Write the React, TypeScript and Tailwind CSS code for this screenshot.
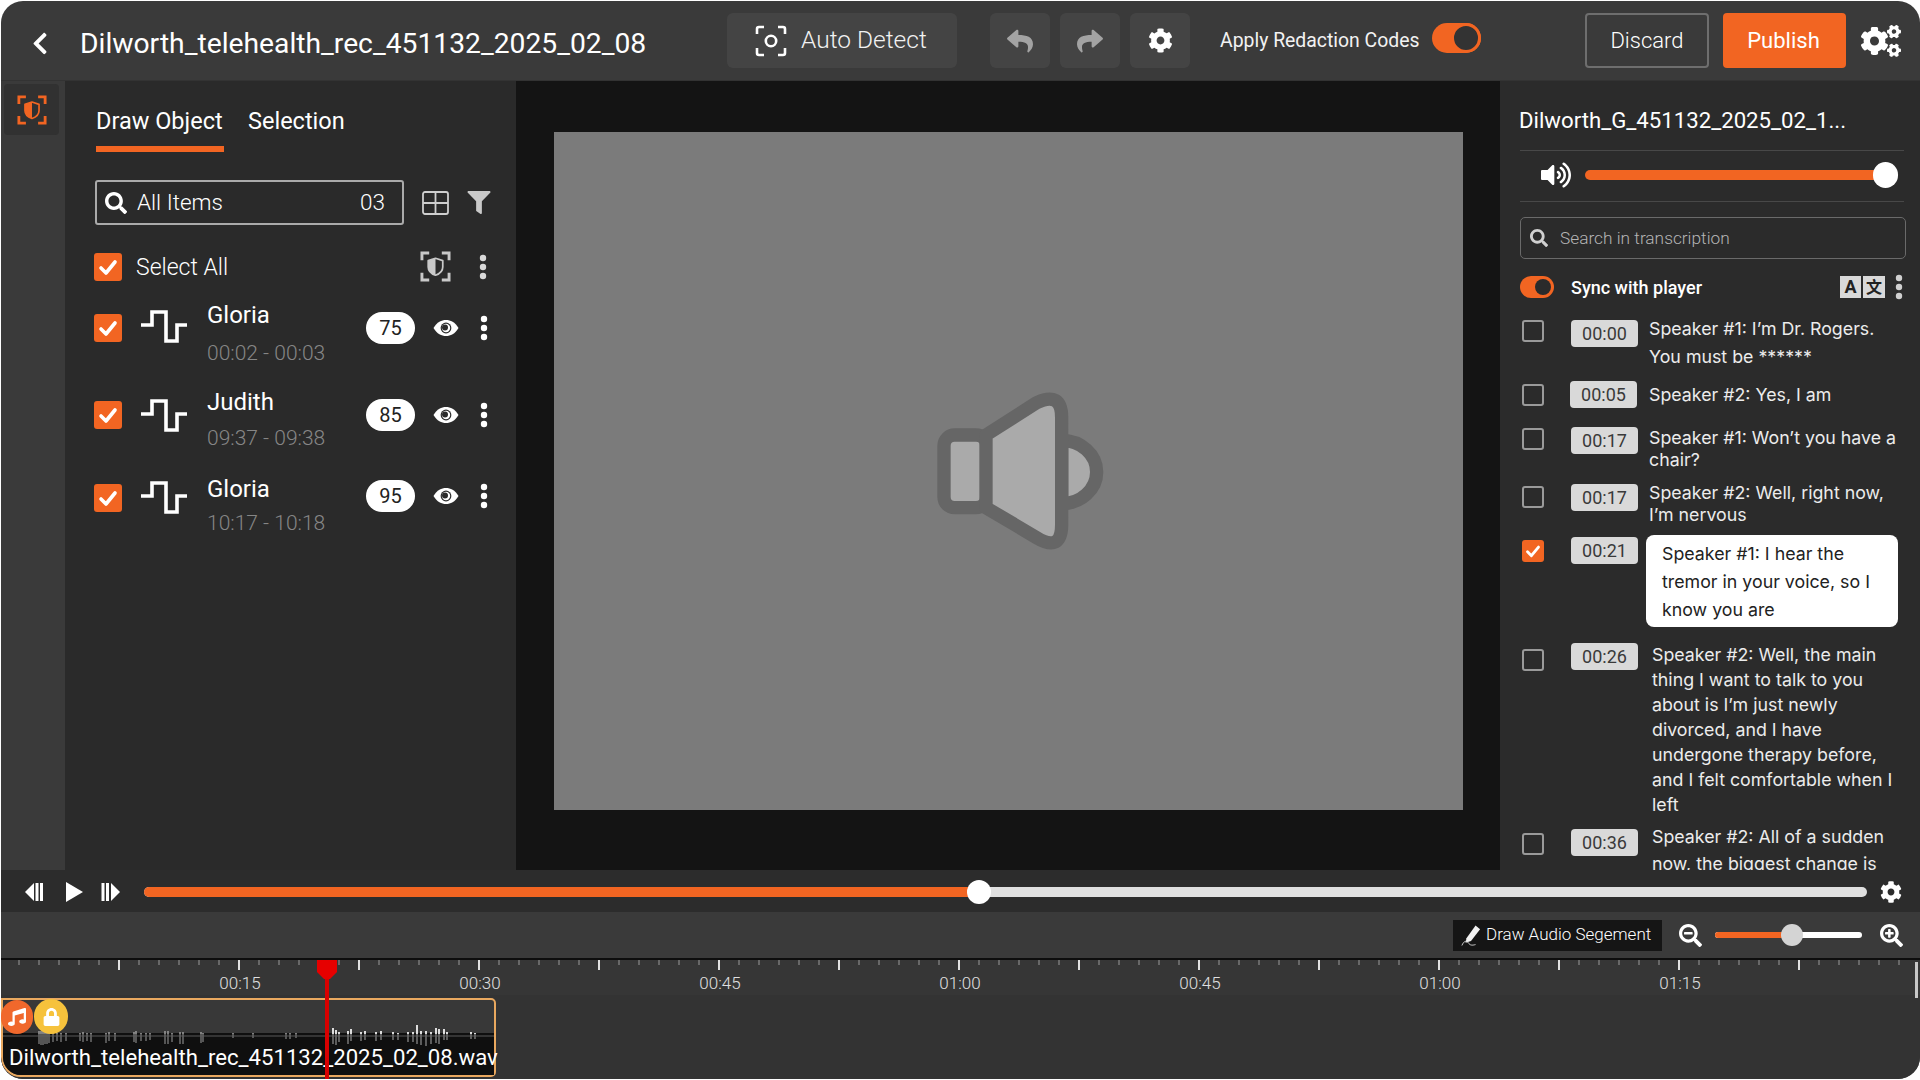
import React from "react";
import { FaCog, FaCogs, FaFilter, FaLock, FaMusic, FaReply, FaSearch, FaSearchMinus, FaSearchPlus, FaShare, FaVolumeUp, FaChevronLeft } from "react-icons/fa";

const Check = ({ cls = "w-[28px] h-[28px]" }: { cls?: string }) => (
  <div className={`${cls} bg-[#f26522] rounded-[3px] flex items-center justify-center shrink-0`}>
    <svg viewBox="0 0 28 28" className="w-full h-full"><path d="M7 15l5 5 9-11" fill="none" stroke="#fff" strokeWidth="3.6" strokeLinecap="round" strokeLinejoin="round" /></svg>
  </div>
);

const Dots = ({ cls = "" }: { cls?: string }) => (
  <svg viewBox="0 0 8 26" className={`w-[8px] h-[26px] ${cls}`} fill="currentColor"><circle cx="4" cy="4" r="3.2" /><circle cx="4" cy="13" r="3.2" /><circle cx="4" cy="22" r="3.2" /></svg>
);

const Pulse = () => (
  <svg viewBox="0 0 46 33" className="w-[46px] h-[33px] shrink-0"><path d="M0 15H11V2H25V31H36V15H46" fill="none" stroke="#fff" strokeWidth="3.6" /></svg>
);

const Eye = () => (
  <svg viewBox="0 0 26 18" className="w-[26px] h-[18px]"><path d="M0.5 9C4 3 8.5 1 13 1s9 2 12.5 8C22 15 17.5 17 13 17S4 15 0.5 9z" fill="#fff" /><circle cx="13" cy="9" r="5.4" fill="#2b2b2b" /><circle cx="13" cy="9" r="4.2" fill="#fff" /><circle cx="12" cy="8.4" r="3" fill="#2b2b2b" /></svg>
);

const Brackets = ({ color, cls }: { color: string; cls: string }) => (
  <svg viewBox="0 0 32 32" className={cls}>
    <path d="M2 9.500V2h7.500M22.500 2H30v7.500M30 22.500V30h-7.500M9.500 30H2v-7.500" fill="none" stroke={color} strokeWidth="3" />
    <path d="M16 7.500l7.500 2.500v6.500c0 4-3 7-7.500 8.500-4.500-1.500-7.500-4.500-7.500-8.500V10z" fill="none" stroke={color} strokeWidth="1.800" strokeLinejoin="round" />
    <path d="M16 7.500l-7.500 2.500v6.500c0 4 3 7 7.500 8.500z" fill={color} />
  </svg>
);

const items = [
  { name: "Gloria", time: "00:02 - 00:03", score: "75", cb: "mt-[14px]", pu: "mt-[10px]", tm: "mt-[8px]", bd: "mt-[12px]" },
  { name: "Judith", time: "09:37 - 09:38", score: "85", cb: "mt-[14px]", pu: "mt-[12px]", tm: "mt-[6px]", bd: "mt-[12px]" },
  { name: "Gloria", time: "10:17 - 10:18", score: "95", cb: "mt-[10px]", pu: "mt-[7px]", tm: "mt-[4px]", bd: "mt-[6px]" },
];

const rows = [
  { t: "00:00", h: "h-[67px]", cb: "mt-[5px]", pill: "mt-[5px] ml-[27px]", tx: "w-[252px] ml-[11px] leading-[28px]", text: "Speaker #1: I’m Dr. Rogers. You must be ******" },
  { t: "00:05", h: "h-[45px]", cb: "mt-[2px]", pill: "-mt-[1px] ml-[26px]", tx: "w-[252px] ml-[12px] mt-[2px] leading-[22px]", text: "Speaker #2: Yes, I am" },
  { t: "00:17", h: "h-[55px]", cb: "mt-[1px]", pill: "ml-[27px]", tx: "w-[252px] ml-[11px] leading-[22px]", text: "Speaker #1: Won’t you have a chair?" },
  { t: "00:17", h: "h-[54px]", cb: "mt-[4px]", pill: "mt-[2px] ml-[27px]", tx: "w-[252px] ml-[11px] leading-[22px]", text: "Speaker #2: Well, right now, I’m nervous" },
];

const Pill = ({ t, cls }: { t: string; cls: string }) => (
  <div className={`w-[67px] h-[27px] bg-[#d9d9d9] rounded-[4px] text-[#3a3a3a] text-[18px] leading-[27px] text-center shrink-0 ${cls}`}>{t}</div>
);

const Box = ({ cls }: { cls: string }) => <div className={`w-[22px] h-[22px] border-2 border-[#9a9a9a] rounded-[3px] shrink-0 ${cls}`} />;

const wave: [number, number, number][] = [
  [36, 3, 8], [38, 3, 9], [40, 3, 9], [42, 2, 8], [44, 3, 8], [46, 2, 7], [50, 2, 6], [54, 1, 5], [58, 1, 6], [63, 1, 5], [77, 1, 5], [80, 2, 6], [84, 1, 5], [88, 1, 6], [103, 1, 7], [106, 2, 5], [112, 1, 5], [131, 2, 6], [133, 3, 7], [138, 1, 5], [143, 1, 5], [147, 1, 4], [162, 3, 8], [165, 3, 8], [169, 1, 6], [177, 2, 8], [180, 2, 8], [198, 2, 7], [200, 1, 6], [230, 1, 2], [250, 1, 2], [283, 1, 3], [287, 1, 3], [293, 1, 2],
  [330, 6, 8], [333, 4, 9], [336, 2, 6], [345, 3, 8], [348, 5, 5], [358, 2, 5], [362, 3, 4], [373, 2, 5], [378, 3, 4], [390, 2, 4], [395, 1, 4], [405, 2, 6], [410, 2, 6], [414, 9, 8], [418, 3, 9], [423, 3, 10], [428, 2, 8], [433, 6, 7], [436, 5, 8], [441, 5, 4], [444, 2, 4], [468, 2, 3], [472, 1, 3],
];

const ticks: number[] = Array.from({ length: 96 }, (_, i) => i * 20 - 2);

export default function App() {
  return (
    <div className="w-[1920px] h-[1080px] bg-white pt-px pl-px overflow-hidden font-[Roboto,sans-serif] text-white">
      <div className="w-[1919px] h-[1078px] bg-[#3a3a3a] rounded-[22px] overflow-hidden flex flex-col">
        {/* Header */}
        <header className="h-[80px] shrink-0 flex items-center pl-[28px] border-b border-[#333]">
          <FaChevronLeft className="w-[22px] h-[25px] text-white shrink-0 mt-[5px]" />
          <div className="ml-[29px] w-[647px] text-[28.250px] leading-[34px] whitespace-nowrap mt-[6px]">Dilworth_telehealth_rec_451132_2025_02_08</div>
          <div className="w-[230px] h-[55px] rounded-[6px] bg-[#444444] flex items-center pl-[28px] gap-[14px] text-[24.500px] font-light shrink-0 text-[#f2f2f2]">
            <svg viewBox="0 0 32 32" className="w-[32px] h-[32px]"><path d="M2 9V4a2 2 0 0 1 2-2h5M23 2h5a2 2 0 0 1 2 2v5M30 23v5a2 2 0 0 1-2 2h-5M9 30H4a2 2 0 0 1-2-2v-5" fill="none" stroke="#fff" strokeWidth="2.6" /><circle cx="16" cy="16" r="5.200" fill="none" stroke="#fff" strokeWidth="2.600" /></svg>
            Auto Detect
          </div>
          <div className="ml-[33px] w-[60px] h-[55px] rounded-[6px] bg-[#444444] flex items-center justify-center shrink-0"><FaReply className="w-[26px] h-[26px] text-[#a3a3a3]" /></div>
          <div className="ml-[10px] w-[60px] h-[55px] rounded-[6px] bg-[#444444] flex items-center justify-center shrink-0"><FaShare className="w-[26px] h-[26px] text-[#a3a3a3]" /></div>
          <div className="ml-[10px] w-[60px] h-[55px] rounded-[6px] bg-[#444444] flex items-center justify-center shrink-0"><FaCog className="w-[25px] h-[25px] text-white" /></div>
          <div className="ml-[30px] w-[212px] text-[19.400px] whitespace-nowrap text-[#f2f2f2]">Apply Redaction Codes</div>
          <div className="w-[49px] h-[30px] rounded-full bg-[#f26522] relative shrink-0 -translate-y-[3px]">
            <div className="absolute right-0 top-0 w-[30px] h-[30px] rounded-full bg-[#333] border-[3px] border-[#f26522]" />
          </div>
          <div className="ml-[104px] w-[124px] h-[55px] rounded-[4px] border-2 border-[#6e6e6e] flex items-center justify-center text-[22px] font-light shrink-0">Discard</div>
          <div className="ml-[14px] w-[123px] h-[55px] rounded-[4px] bg-[#f26522] flex items-center justify-center text-[22px] shrink-0 pr-[2px]">Publish</div>
          <FaCogs className="ml-[15px] w-[40px] h-[36px] text-white shrink-0" />
        </header>

        {/* Main */}
        <div className="h-[789px] shrink-0 flex">
          <div className="w-[64px] shrink-0 pl-[3px] pt-[3px]">
            <div className="w-[55px] h-[51px] rounded-[4px] bg-[#313131] flex items-center justify-center">
              <Brackets color="#f26522" cls="w-[30px] h-[30px]" />
            </div>
          </div>

          <aside className="w-[451px] shrink-0 bg-[#2a2a2a]">
            <div className="h-[71px] pl-[31px] pt-[20px] flex gap-[24px] text-[23.500px] leading-[40px]">
              <div className="flex flex-col w-[128px] whitespace-nowrap">Draw Object<div className="mt-[5px] h-[6px] bg-[#f26522]" /></div>
              <div className="whitespace-nowrap">Selection</div>
            </div>
            <div className="mt-[28px] ml-[30px] flex items-center">
              <div className="w-[309px] h-[45px] border-2 border-[#aaaaaa] rounded-[3px] flex items-center pl-[8px] pr-[17px] text-[22.500px] font-light">
                <FaSearch className="w-[22px] h-[22px] shrink-0" />
                <span className="ml-[10px] flex-1">All Items</span>
                <span>03</span>
              </div>
              <svg viewBox="0 0 27 24" className="ml-[18px] w-[27px] h-[24px]"><rect x="1" y="1" width="25" height="22" rx="2" fill="none" stroke="#cfcfcf" strokeWidth="1.800" /><path d="M13.500 1v22M1 12h25" stroke="#cfcfcf" strokeWidth="1.800" /></svg>
              <FaFilter className="ml-[18px] w-[24px] h-[23px] text-[#c9c9c9]" />
            </div>
            <div className="mt-[27px] h-[29px] ml-[29px] flex items-center">
              <Check />
              <span className="ml-[14px] w-[284px] text-[23px] font-light mt-[3px]">Select All</span>
              <Brackets color="#c9c9c9" cls="w-[31px] h-[31px]" />
              <Dots cls="ml-[28px] text-[#d9d9d9]" />
            </div>
            <div className="mt-[19px] ml-[29px]">
              {items.map((it, i) => (
                <div key={i} className="flex items-start h-[87px]">
                  <div className={it.cb}><Check /></div>
                  <div className={`ml-[19px] ${it.pu}`}><Pulse /></div>
                  <div className="ml-[20px] w-[159px] shrink-0">
                    <div className="text-[24px] leading-[30px]">{it.name}</div>
                    <div className={`text-[21px] leading-[30px] text-[#868686] font-light whitespace-nowrap ${it.tm}`}>{it.time}</div>
                  </div>
                  <div className={`flex items-center ${it.bd}`}>
                    <div className="w-[49px] h-[32px] rounded-full bg-white text-[#222] text-[20px] text-center leading-[32px]">{it.score}</div>
                    <div className="ml-[18px]"><Eye /></div>
                    <Dots cls="ml-[21px] text-white" />
                  </div>
                </div>
              ))}
            </div>
          </aside>

          <div className="w-[984px] shrink-0 bg-[#141414] pl-[38px] pt-[51px]">
            <div className="w-[909px] h-[678px] bg-[#7b7b7b] flex items-center justify-center">
              <svg viewBox="-3 15 780 630" className="w-[260px] h-[210px]">
                <path d="M545 238a105 95 0 0 1 0 190z" fill="#aaa" stroke="#666" strokeWidth="40" />
                <rect x="192" y="222" width="128" height="218" rx="32" fill="#aaa" stroke="#666" strokeWidth="40" />
                <path d="M318 222L470 125Q545 90 545 170V490Q545 575 470 530L318 440Z" fill="#aaa" stroke="#666" strokeWidth="40" strokeLinejoin="round" />
              </svg>
            </div>
          </div>

          <aside className="flex-1 bg-[#2b2b2b] overflow-hidden">
            <div className="pt-[24px] pl-[19px] text-[22.200px] leading-[30px] whitespace-nowrap">Dilworth_G_451132_2025_02_1...</div>
            <div className="mt-[15px] ml-[20px] w-[384px] h-[52px] border-y border-[#484848] flex items-center">
              <FaVolumeUp className="ml-[21px] w-[30px] h-[30px] text-white mb-[2px]" />
              <div className="ml-[14px] w-[312px] h-[10px] rounded-full bg-[#f26522] relative mb-[2px]">
                <div className="absolute -right-px -top-[8px] w-[25px] h-[26px] rounded-full bg-white" />
              </div>
            </div>
            <div className="mt-[15px] ml-[20px] w-[386px] h-[42px] border border-[#6a6a6a] rounded-[5px] flex items-center pl-[9px] text-[17.300px] text-[#b5b5b5] font-light">
              <FaSearch className="w-[18px] h-[18px] text-[#d0d0d0]" />
              <span className="ml-[12px] mt-[2px]">Search in transcription</span>
            </div>
            <div className="mt-[17px] ml-[20px] h-[22px] flex items-center">
              <div className="w-[34px] h-[22px] rounded-full bg-[#f26522] relative shrink-0">
                <div className="absolute right-[3px] top-[3px] w-[16px] h-[16px] rounded-full bg-[#2b2b2b]" />
              </div>
              <span className="ml-[17px] w-[269px] text-[18px] font-medium">Sync with player</span>
              <div className="w-[21px] h-[22px] bg-[#d9d9d9] text-[#222] text-[18px] font-bold leading-[22px] text-center">A</div>
              <div className="ml-[2px] w-[22px] h-[22px] bg-[#d9d9d9] text-[#222] text-[16px] font-bold leading-[21px] text-center font-['Noto_Sans_CJK_SC',sans-serif]">文</div>
              <Dots cls="ml-[10px] text-[#d0d0d0]" />
            </div>
            <div className="mt-[17px] ml-[22px] font-[Inter,sans-serif] text-[17.800px] text-[#ececec]">
              {rows.map((r, i) => (
                <div key={i} className={`flex items-start ${r.h}`}>
                  <Box cls={r.cb} />
                  <Pill t={r.t} cls={`font-[Roboto,sans-serif] ${r.pill}`} />
                  <div className={r.tx}>{r.text}</div>
                </div>
              ))}
              <div className="flex items-start h-[106px]">
                <Check cls="w-[22px] h-[22px] mt-[4px]" />
                <Pill t="00:21" cls="font-[Roboto,sans-serif] mt-[1px] ml-[27px]" />
                <div className="ml-[8px] -mt-[1px] w-[252px] h-[92px] bg-white rounded-[8px] text-[#222] pl-[16px] pr-[8px] pt-[5px] leading-[28px]">Speaker #1: I hear the tremor in your voice, so I know you are</div>
              </div>
              <div className="flex items-start h-[181px]">
                <Box cls="mt-[7px]" />
                <Pill t="00:26" cls="font-[Roboto,sans-serif] mt-[1px] ml-[27px]" />
                <div className="ml-[14px] w-[248px] leading-[25px]">Speaker #2: Well, the main thing I want to talk to you about is I’m just newly divorced, and I have undergone therapy before, and I felt comfortable when I left</div>
              </div>
              <div className="flex items-start">
                <Box cls="mt-[10px]" />
                <Pill t="00:36" cls="font-[Roboto,sans-serif] mt-[6px] ml-[27px]" />
                <div className="ml-[14px] w-[240px] leading-[27px]">Speaker #2: All of a sudden now, the biggest change is</div>
              </div>
            </div>
          </aside>
        </div>

        {/* Player */}
        <div className="h-[42px] shrink-0 bg-[#2c2c2c] flex items-center pl-[24px] pt-[2px]">
          <svg viewBox="0 0 19 20" className="w-[19px] h-[20px] fill-white"><path d="M9 1v18L0 10z" /><rect x="10.500" y="1" width="3" height="18" /><rect x="15" y="1" width="3" height="18" /></svg>
          <svg viewBox="0 0 17 20" className="ml-[22px] w-[17px] h-[20px] fill-white"><path d="M0 0l17 10L0 20z" /></svg>
          <svg viewBox="0 0 19 20" className="ml-[18px] w-[19px] h-[20px] fill-white"><rect x="0.500" y="1" width="3" height="18" /><rect x="5" y="1" width="3" height="18" /><path d="M10 1l9 9-9 9z" /></svg>
          <div className="ml-[24px] w-[1723px] h-[10px] rounded-full bg-[#e0e0e0] relative shrink-0">
            <div className="w-[836px] h-[10px] rounded-full bg-[#f26522]" />
            <div className="absolute left-[823px] -top-[7px] w-[24px] h-[24px] rounded-full bg-white" />
          </div>
          <FaCog className="ml-[13px] w-[22px] h-[22px] text-white shrink-0" />
        </div>

        {/* Toolbar */}
        <div className="h-[48px] shrink-0 flex items-center justify-end pr-[17px] border-b-2 border-[#0d0d0d]">
          <div className="w-[209px] h-[31px] bg-[#151515] flex items-center pl-[8px] text-[17px] font-light shrink-0">
            <svg viewBox="0 0 22 24" className="w-[20px] h-[23px] shrink-0"><path d="M6 15L16 1l5 4-10 13-6 2z" fill="#f2f2f2" /><path d="M1 23c2-5 5-6 7-3s4 3 8 2" fill="none" stroke="#d8d8d8" strokeWidth="1" /></svg>
            <span className="ml-[5px] whitespace-nowrap">Draw Audio Segement</span>
          </div>
          <FaSearchMinus className="ml-[17px] w-[23px] h-[23px] text-white shrink-0" />
          <div className="ml-[13px] w-[147px] h-[6px] rounded-full bg-white relative shrink-0">
            <div className="w-[78px] h-[6px] rounded-full bg-[#f26522]" />
            <div className="absolute left-[66px] -top-[8px] w-[22px] h-[22px] rounded-full bg-[#d4d4d4]" />
          </div>
          <FaSearchPlus className="ml-[18px] w-[23px] h-[23px] text-white shrink-0" />
        </div>

        {/* Timeline */}
        <div className="flex-1 bg-[#333333] relative">
          <div className="h-[35px] bg-[#363636]">
            <svg viewBox="0 0 1919 11" className="w-[1919px] h-[11px] block">
              {ticks.map((x) => {
                const major = (x - 118) % 120 === 0;
                return <line key={x} x1={x} x2={x} y1="0" y2={major ? 10 : 5} stroke={major ? "#e2e2e2" : "#9a9a9a"} strokeWidth={major ? 2 : 1} />;
              })}
            </svg>
            <div className="flex pl-[119px] text-[17px] leading-[24px] text-[#e0e0e0] font-light">
              {["00:15", "00:30", "00:45", "01:00", "00:45", "01:00", "01:15"].map((l, i) => (
                <div key={i} className="w-[240px] text-center shrink-0">{l}</div>
              ))}
            </div>
          </div>
          <div className="mt-[3px] w-[495px] h-[79px] border-2 border-[#e9a85f] rounded-tr-[5px] rounded-br-[5px] rounded-bl-[20px] relative bg-[#383838]">
            <div className="absolute left-0 right-0 bottom-0 h-[42px] bg-[#0f0f0f] rounded-bl-[18px]" />
            <svg viewBox="0 0 491 24" className="absolute left-0 top-[22px] w-[491px] h-[24px]">
              <line x1="0" x2="491" y1="14" y2="14" stroke="#5a5a5a" strokeWidth="1" />
              {wave.map(([x, up, down], i) => (
                <g key={i} strokeWidth="1.800">
                  <line x1={x} x2={x} y1={12 - up} y2={12} stroke={x > 320 ? "#f0f0f0" : "#8c8c8c"} />
                  <line x1={x} x2={x} y1={12} y2={14 + down} stroke={x > 320 ? "#666666" : "#5e5e5e"} />
                </g>
              ))}
            </svg>
            <div className="absolute -left-[2px] top-0 w-[32px] h-[34px] rounded-full bg-[#f0682c] flex items-center justify-center"><FaMusic className="w-[18px] h-[18px] text-white" /></div>
            <div className="absolute left-[31px] -top-[1px] w-[34px] h-[35px] rounded-full bg-[#f6c23c] flex items-center justify-center"><FaLock className="w-[17px] h-[18px] text-white" /></div>
            <div className="absolute left-[6px] bottom-[3px] text-[22.150px] leading-[30px] whitespace-nowrap">Dilworth_telehealth_rec_451132_2025_02_08.wav</div>
          </div>
          {/* Playhead */}
          <div className="absolute left-[324px] top-0 w-[4px] h-full bg-[#d80000]" />
          <svg viewBox="0 0 20 19" className="absolute left-[316px] top-0 w-[20px] h-[19px] fill-[#e60000]"><path d="M0 0h20v12l-7 7H7l-7-7z" /></svg>
          {/* Scrollbar */}
          <div className="absolute right-[2px] top-[2px] w-[3px] h-[36px] bg-[#c8c8c8]" />
        </div>
      </div>
    </div>
  );
}
